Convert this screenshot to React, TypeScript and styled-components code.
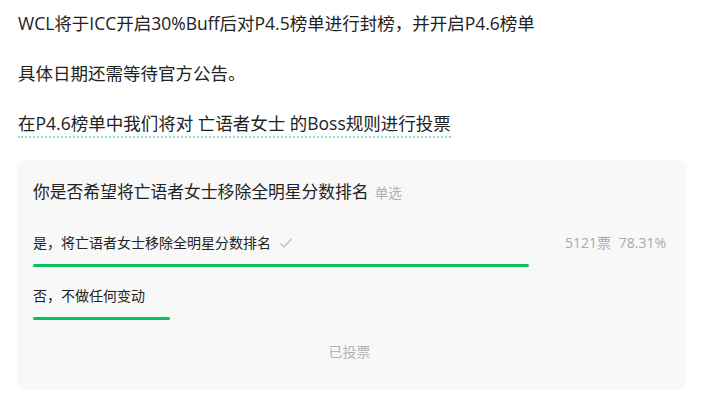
import React from "react";
import styled, { createGlobalStyle } from "styled-components";

const Global = createGlobalStyle`
  html, body { margin: 0; padding: 0; background: #ffffff; }
  body { font-family: "Open Sans", "Noto Sans CJK SC", sans-serif; color: #222; }
`;

const Page = styled.div`
  width: 720px;
  height: 400px;
  box-sizing: border-box;
  padding: 9px 34px 0 18px;
  display: flex;
  flex-direction: column;
  gap: 22px;
`;

const Para = styled.p`
  margin: 0;
  font-size: 17.5px;
  line-height: 28px;
  color: #222;
  white-space: nowrap;
`;

const Dotted = styled.span`
  border-bottom: 2px dotted #8fdcc6;
  padding-bottom: 1px;
`;

const Card = styled.div`
  margin-top: 1px;
  width: 669px;
  margin-left: -1px;
  box-sizing: border-box;
  background: #f8f8f8;
  border-radius: 8px;
  padding: 20px 20px 28px 16px;
  display: flex;
  flex-direction: column;
`;

const Title = styled.div`
  font-size: 16.8px;
  line-height: 24px;
  color: #222;
  display: flex;
  align-items: baseline;
  gap: 6px;
`;

const Tag = styled.span`
  font-size: 13.5px;
  color: #b0b0b0;
`;

const Option = styled.div<{ $first?: boolean }>`
  margin-top: ${(p) => (p.$first ? 27 : 18)}px;
  display: flex;
  flex-direction: column;
  gap: 10px;
`;

const OptionRow = styled.div`
  display: flex;
  align-items: center;
  justify-content: space-between;
  font-size: 14px;
  line-height: 22px;
`;

const Label = styled.span`
  display: flex;
  align-items: center;
  gap: 8px;
  color: #222;
`;

const Stats = styled.span`
  color: #a8a8a8;
  word-spacing: 4px;
`;

const Track = styled.div`
  height: 3px;
  width: 100%;
`;

const Fill = styled.div`
  height: 3px;
  border-radius: 2px;
  background: #07c160;
`;

const Voted = styled.div`
  margin-top: 22px;
  text-align: center;
  font-size: 14px;
  line-height: 20px;
  color: #b2b2b2;
`;

const Check = () => (
  <svg width="14" height="12" viewBox="0 0 14 12" fill="none">
    <path d="M1.5 6.5 L5 10 L12.5 2" stroke="#b8b8b8" strokeWidth="1.2" />
  </svg>
);

const options = [
  { label: "是，将亡语者女士移除全明星分数排名", pct: 78.31, votes: 5121, mine: true },
  { label: "否，不做任何变动", pct: 21.69, votes: 0, mine: false },
];

export default function App() {
  return (
    <>
      <Global />
      <Page>
        <Para>WCL将于ICC开启30%Buff后对P4.5榜单进行封榜，并开启P4.6榜单</Para>
        <Para>具体日期还需等待官方公告。</Para>
        <Para>
          <Dotted>在P4.6榜单中我们将对 亡语者女士 的Boss规则进行投票</Dotted>
        </Para>
        <Card>
          <Title>
            你是否希望将亡语者女士移除全明星分数排名<Tag>单选</Tag>
          </Title>
          {options.map((o, i) => (
            <Option key={i} $first={i === 0}>
              <OptionRow>
                <Label>
                  {o.label}
                  {o.mine && <Check />}
                </Label>
                {o.mine && <Stats>{o.votes}票 {o.pct.toFixed(2)}%</Stats>}
              </OptionRow>
              <Track>
                <Fill style={{ width: `${o.pct}%` }} />
              </Track>
            </Option>
          ))}
          <Voted>已投票</Voted>
        </Card>
      </Page>
    </>
  );
}
